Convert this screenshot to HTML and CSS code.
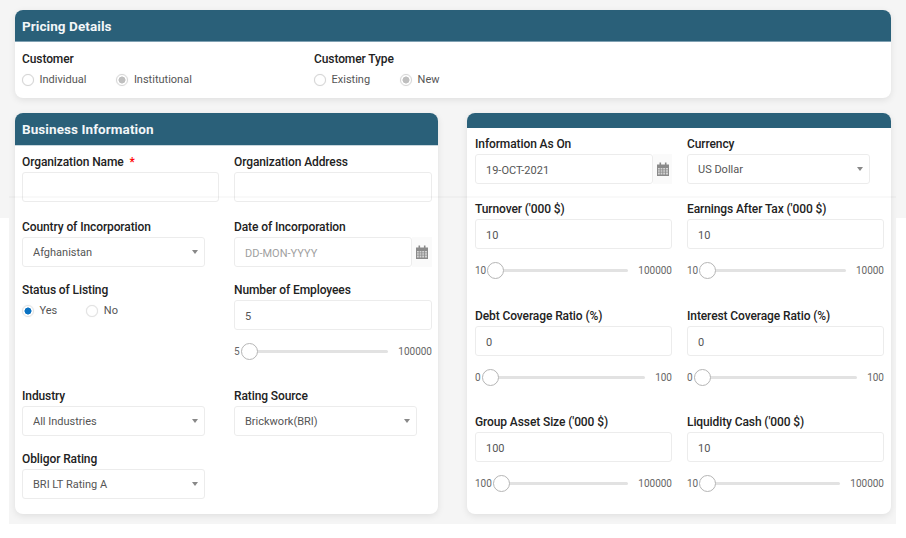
FILE: index.html
```html
<!DOCTYPE html>
<html lang="en">
<head>
<meta charset="utf-8">
<title>Pricing Details</title>
<link rel="stylesheet" href="styles.css">
</head>
<body>
<main class="page">
  <div class="seam"></div>
  <section class="card">
    <h2 class="card-head">Pricing Details</h2>
    <div class="pricing-body">
      <div class="pricing-group">
        <div class="label">Customer</div>
        <div class="radios">
          <label class="radio-item"><input class="radio muted" type="radio" name="customer">Individual</label>
          <label class="radio-item"><input class="radio muted" type="radio" name="customer" checked>Institutional</label>
        </div>
      </div>
      <div class="pricing-group">
        <div class="label">Customer Type</div>
        <div class="radios">
          <label class="radio-item"><input class="radio muted" type="radio" name="ctype">Existing</label>
          <label class="radio-item"><input class="radio muted" type="radio" name="ctype" checked>New</label>
        </div>
      </div>
    </div>
  </section>

  <div class="columns">
    <section class="card">
      <h2 class="card-head">Business Information</h2>
      <div class="form form-left">
        <div class="field">
          <div class="label">Organization Name <span class="req">*</span></div>
          <input class="input" type="text">
        </div>
        <div class="field">
          <div class="label">Organization Address</div>
          <input class="input" type="text">
        </div>
        <div class="field">
          <div class="label">Country of Incorporation</div>
          <div class="select"><select><option>Afghanistan</option></select></div>
        </div>
        <div class="field">
          <div class="label">Date of Incorporation</div>
          <div class="date">
            <input class="input" type="text" placeholder="DD-MON-YYYY">
            <span class="addon"><svg class="cal" viewBox="0 0 12 14"><path d="M0 2.5h12V14H0z" fill="#8a8a8a"/><path d="M2.5 .5h1.600v3H2.500zM7.900 .5h1.600v3H7.900z" fill="#8a8a8a"/><path d="M1 6h1.800v1.500H1zM3.600 6h1.800v1.500H3.600zM6.200 6H8v1.500H6.200zM8.800 6h2.200v1.500H8.800zM1 8.300h1.800v1.500H1zM3.600 8.300h1.800v1.500H3.600zM6.200 8.300H8v1.500H6.200zM8.800 8.300h2.200v1.500H8.800zM1 10.600h1.800v1.900H1zM3.600 10.600h1.800v1.900H3.600zM6.200 10.600H8v1.900H6.200zM8.800 10.600h2.200v1.900H8.800z" fill="#d4d4d4"/></svg></span>
          </div>
        </div>
        <div class="field">
          <div class="label">Status of Listing</div>
          <div class="radios radios-tight">
            <label class="radio-item"><input class="radio" type="radio" name="listing" checked>Yes</label>
            <label class="radio-item"><input class="radio" type="radio" name="listing">No</label>
          </div>
        </div>
        <div class="field">
          <div class="label">Number of Employees</div>
          <input class="input" type="text" value="5">
          <div class="slider"><span>5</span><div class="track"><i class="thumb"></i></div><span class="max">100000</span></div>
        </div>
        <div class="field">
          <div class="label">Industry</div>
          <div class="select"><select><option>All Industries</option></select></div>
        </div>
        <div class="field">
          <div class="label">Rating Source</div>
          <div class="select"><select><option>Brickwork(BRI)</option></select></div>
        </div>
        <div class="field">
          <div class="label">Obligor Rating</div>
          <div class="select"><select><option>BRI LT Rating A</option></select></div>
        </div>
      </div>
    </section>

    <section class="card">
      <div class="card-head card-head-slim"></div>
      <div class="form form-right">
        <div class="field">
          <div class="label">Information As On</div>
          <div class="date">
            <input class="input" type="text" value="19-OCT-2021">
            <span class="addon"><svg class="cal" viewBox="0 0 12 14"><path d="M0 2.5h12V14H0z" fill="#8a8a8a"/><path d="M2.5 .5h1.600v3H2.500zM7.900 .5h1.600v3H7.900z" fill="#8a8a8a"/><path d="M1 6h1.800v1.500H1zM3.600 6h1.800v1.500H3.600zM6.200 6H8v1.500H6.200zM8.800 6h2.200v1.500H8.800zM1 8.300h1.800v1.500H1zM3.600 8.300h1.800v1.500H3.600zM6.200 8.300H8v1.500H6.200zM8.800 8.300h2.200v1.500H8.800zM1 10.600h1.800v1.900H1zM3.600 10.600h1.800v1.900H3.600zM6.200 10.600H8v1.900H6.200zM8.800 10.600h2.200v1.900H8.800z" fill="#d4d4d4"/></svg></span>
          </div>
        </div>
        <div class="field">
          <div class="label">Currency</div>
          <div class="select"><select><option>US Dollar</option></select></div>
        </div>
        <div class="field">
          <div class="label">Turnover ('000 $)</div>
          <input class="input" type="text" value="10">
          <div class="slider"><span>10</span><div class="track"><i class="thumb"></i></div><span class="max">100000</span></div>
        </div>
        <div class="field">
          <div class="label">Earnings After Tax ('000 $)</div>
          <input class="input" type="text" value="10">
          <div class="slider"><span>10</span><div class="track"><i class="thumb"></i></div><span class="max">10000</span></div>
        </div>
        <div class="field">
          <div class="label">Debt Coverage Ratio (%)</div>
          <input class="input" type="text" value="0">
          <div class="slider"><span>0</span><div class="track"><i class="thumb"></i></div><span class="max">100</span></div>
        </div>
        <div class="field">
          <div class="label">Interest Coverage Ratio (%)</div>
          <input class="input" type="text" value="0">
          <div class="slider"><span>0</span><div class="track"><i class="thumb"></i></div><span class="max">100</span></div>
        </div>
        <div class="field">
          <div class="label">Group Asset Size ('000 $)</div>
          <input class="input" type="text" value="100">
          <div class="slider"><span>100</span><div class="track"><i class="thumb"></i></div><span class="max">100000</span></div>
        </div>
        <div class="field">
          <div class="label">Liquidity Cash ('000 $)</div>
          <input class="input" type="text" value="10">
          <div class="slider"><span>10</span><div class="track"><i class="thumb"></i></div><span class="max">100000</span></div>
        </div>
      </div>
    </section>
  </div>
</main>
</body>
</html>
```

FILE: styles.css
```css
* { box-sizing: border-box; }

html, body {
  margin: 0;
  background: #fff;
}

body {
  font-family: Roboto, "Noto Sans", sans-serif;
  font-size: 11px;
  color: #555;
}

.page {
  position: relative;
  width: 906px;
  height: 538px;
  padding: 10px 15px 0;
  overflow: hidden;
  background:
    linear-gradient(#f5f5f5, #f5f5f5) 0 0 / 100% 218px no-repeat,
    linear-gradient(#f5f5f5, #f5f5f5) 9px 0 / 887px 524px no-repeat;
}

.seam {
  position: absolute;
  top: 196px;
  left: 9px;
  width: 887px;
  height: 2px;
  background: rgba(0, 0, 0, .025);
  pointer-events: none;
  z-index: 2;
}

.card {
  background: #fff;
  border-radius: 8px;
  box-shadow: 0 2px 7px rgba(0, 0, 0, .09);
  overflow: hidden;
}

.card-head {
  height: 32px;
  margin: 0;
  padding: 0 7px;
  background: #2a6079;
  border-bottom: 1px solid #7fa0b2;
  color: #f2f6f8;
  font-size: 13.500px;
  font-weight: 700;
  letter-spacing: .08px;
  line-height: 33px;
}

.card-head-slim {
  height: 15px;
  border-bottom: 0;
}

.columns .card > .card-head:not(.card-head-slim) {
  height: 33px;
  border-bottom: 1px solid #c8d6dd;
}

.label {
  height: 16px;
  margin-bottom: 3px;
  color: #222;
  font-size: 12px;
  font-weight: 500;
  letter-spacing: -.1px;
  line-height: 18px;
  white-space: nowrap;
}

.req {
  margin-left: 3px;
  color: #f00;
}

.pricing-body {
  display: flex;
  height: 56px;
  padding: 8px 7px 0;
}

.pricing-group {
  width: 292px;
}

.radios {
  display: flex;
  gap: 30px;
  padding-top: 3px;
}

.radios-tight {
  gap: 29px;
}

.radio-item {
  display: flex;
  align-items: center;
  gap: 5.500px;
  height: 16px;
  line-height: 16px;
}

.radio {
  appearance: none;
  width: 12px;
  height: 12px;
  margin: 0;
  border: 1px solid #e2e2e2;
  border-radius: 50%;
  background: #fff;
  box-shadow: 0 0 1px rgba(0, 0, 0, .12);
}

.radio:checked {
  background: radial-gradient(circle, #0a72c2 0 3.200px, #fff 3.800px);
}

.radio.muted {
  border-color: #d5d5d5;
}

.radio.muted:checked {
  background: radial-gradient(circle, #bfbfbf 0 3.200px, #fff 3.800px);
}

.columns {
  display: grid;
  grid-template-columns: 423px 424px;
  gap: 29px;
  margin-top: 15px;
}

.columns .card {
  height: 401px;
}

.form {
  display: grid;
  column-gap: 15px;
  padding: 7px 7px 0;
}

.form-left {
  grid-template-columns: 197px 198px;
  grid-template-rows: 65px 63px 106px 63px;
}

.form-right {
  grid-template-columns: 197px 197px;
  grid-template-rows: 65px 107px 106px 90px;
  column-gap: 15px;
  padding-left: 8px;
}

.input {
  display: block;
  width: 100%;
  height: 30px;
  padding: 2px 10px 0;
  border: 1px solid #ececec;
  border-radius: 3px;
  background: #fff;
  color: #555;
  font: inherit;
  outline: 0;
}

.input::placeholder {
  color: #a0a0a0;
  opacity: 1;
}

.select {
  position: relative;
  width: 183px;
}

.select select {
  display: block;
  width: 100%;
  height: 30px;
  padding: 1px 10px 0;
  border: 1px solid #ececec;
  border-radius: 3px;
  background: #fff;
  color: #555;
  font: inherit;
  appearance: none;
  outline: 0;
}

.select::after {
  content: "";
  position: absolute;
  top: 13px;
  right: 7px;
  border-top: 4px solid #888;
  border-left: 3.500px solid transparent;
  border-right: 3.500px solid transparent;
}

.date {
  display: flex;
}

.date .input {
  flex: 1;
  min-width: 0;
}

.addon {
  display: flex;
  flex: none;
  align-items: center;
  justify-content: center;
  width: 19px;
  height: 30px;
  background: #fafafa;
}

.form-left .addon {
  width: 20px;
}

.cal {
  width: 12px;
  height: 14px;
}

.slider {
  display: flex;
  align-items: center;
  height: 17px;
  margin-top: 13px;
  font-size: 10px;
  line-height: 17px;
  color: #666;
}

.track {
  position: relative;
  flex: 1;
  height: 3px;
  margin-left: 1px;
  border-radius: 2px;
  background: #e2e2e2;
}

.thumb {
  position: absolute;
  top: -7px;
  left: 0;
  width: 17px;
  height: 17px;
  border: 1px solid #b5b5b5;
  border-radius: 50%;
  background: #fff;
}

.max {
  margin-left: 10px;
}
```
